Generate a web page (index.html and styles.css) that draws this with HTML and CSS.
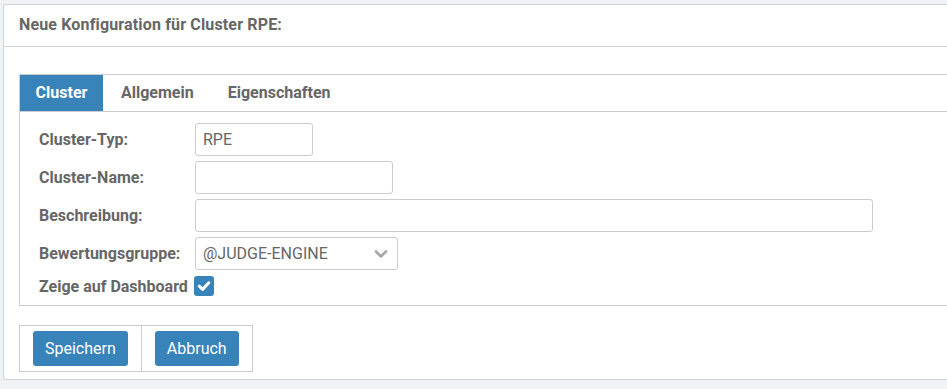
FILE: index.html
```html
<!DOCTYPE html>
<html lang="de">
<head>
<meta charset="utf-8">
<title>Neue Konfiguration</title>
<link rel="stylesheet" href="styles.css">
</head>
<body>
<div class="panel">
  <div class="panel-header">Neue Konfiguration für Cluster RPE:</div>
  <div class="panel-body">
    <div class="tabs-box">
      <div class="tab-nav">
        <div class="tab active">Cluster</div>
        <div class="tab">Allgemein</div>
        <div class="tab">Eigenschaften</div>
      </div>
      <div class="form">
        <label class="lbl">Cluster-Typ:</label>
        <div class="field"><div class="input w-typ">RPE</div></div>
        <label class="lbl">Cluster-Name:</label>
        <div class="field"><div class="input w-name"></div></div>
        <label class="lbl">Beschreibung:</label>
        <div class="field"><div class="input w-desc"></div></div>
        <label class="lbl">Bewertungsgruppe:</label>
        <div class="field"><div class="input select w-sel"><span>@JUDGE-ENGINE</span>
          <svg class="chev" width="14" height="10" viewBox="0 0 14 10"><path d="M2 2.5 L7 7.5 L12 2.5" fill="none" stroke="#aaa" stroke-width="2.8" stroke-linecap="round" stroke-linejoin="round"/></svg>
        </div></div>
        <div class="check-row">
          <span class="lbl">Zeige auf Dashboard</span>
          <span class="checkbox"><svg width="14" height="12" viewBox="0 0 14 12"><path d="M2.2 6.2 L5.6 9.4 L11.8 2.8" fill="none" stroke="#fff" stroke-width="3" stroke-linecap="round" stroke-linejoin="round"/></svg></span>
        </div>
      </div>
    </div>
    <div class="btn-group">
      <div class="btn-cell"><button class="btn">Speichern</button></div>
      <div class="btn-cell"><button class="btn">Abbruch</button></div>
    </div>
  </div>
</div>
</body>
</html>
```

FILE: styles.css
```css
html, body {
  margin: 0;
  padding: 0;
}
body {
  background: #f0f4f7;
  font-family: Roboto, "Liberation Sans", Arial, sans-serif;
  color: #666;
  overflow: hidden;
  padding: 4px 0 0 3px;
  height: 389px;
  box-sizing: border-box;
}
.panel {
  width: 980px;
  background: #fff;
  border: 1px solid #cdd3d8;
  border-right: none;
  border-radius: 2px 0 0 2px;
}
.panel-header {
  height: 41px;
  line-height: 40px;
  padding-left: 15px;
  font-size: 16px;
  font-weight: bold;
  letter-spacing: 0.15px;
  color: #666;
  border-bottom: 1px solid #cdd3d8;
}
.panel-body {
  padding: 27px 0 7px 15px;
}
.tabs-box {
  border: 1px solid #ccc;
  border-right: none;
}
.tab-nav {
  display: flex;
  height: 36px;
  border-bottom: 1px solid #ccc;
}
.tab {
  padding: 0 16px 0 18px;
  line-height: 36px;
  font-size: 16px;
  font-weight: bold;
  color: #666;
}
.tab.active {
  background: #3983bb;
  color: #fff;
  width: 83px;
  padding: 0;
  text-align: center;
  box-sizing: border-box;
}
.form {
  display: grid;
  grid-template-columns: 156px auto;
  row-gap: 5px;
  padding: 11px 0 9px 19px;
  align-items: center;
}
.lbl {
  font-size: 16px;
  font-weight: bold;
  color: #666;
}
.field {
  display: flex;
}
.input {
  box-sizing: border-box;
  height: 33px;
  border: 1px solid #ccc;
  border-radius: 3px;
  padding-left: 7px;
  font-size: 16px;
  color: #666;
  line-height: 31px;
}
.w-typ { width: 118px; }
.w-name { width: 198px; }
.w-desc { width: 678px; }
.w-sel { width: 203px; }
.select {
  display: flex;
  justify-content: space-between;
  align-items: center;
  padding-right: 9px;
}
.chev { display: block; }
.check-row {
  grid-column: 1 / 3;
  display: flex;
  align-items: center;
  gap: 6px;
  margin-top: 1px;
}
.checkbox {
  width: 20px;
  height: 20px;
  border-radius: 3px;
  background: #3983bb;
  display: flex;
  align-items: center;
  justify-content: center;
}
.checkbox svg { display: block; }
.btn-group {
  display: inline-flex;
  margin-top: 19px;
  border: 1px solid #ccc;
}
.btn-cell {
  padding: 5px 13px 5px 13px;
}
.btn-cell + .btn-cell {
  border-left: 1px solid #ccc;
}
.btn {
  display: block;
  height: 35px;
  padding: 0 12px;
  border: none;
  border-radius: 3px;
  background: #3983bb;
  color: #fff;
  font-family: Roboto, "Liberation Sans", Arial, sans-serif;
  font-size: 16px;
}
```
